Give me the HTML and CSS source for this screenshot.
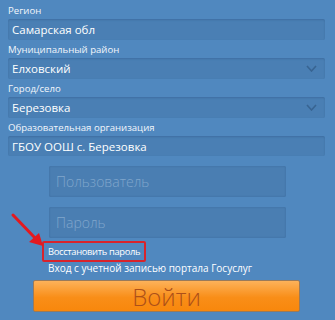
FILE: index.html
```html
<!DOCTYPE html>
<html lang="ru">
<head>
<meta charset="utf-8">
<link rel="stylesheet" href="styles.css">
</head>
<body>
<div class="page">
  <div class="fields">
    <div class="field">
      <div class="label">Регион</div>
      <div class="box">Самарская обл</div>
    </div>
    <div class="field">
      <div class="label">Муниципальный район</div>
      <div class="box select">Елховский<svg class="chev" width="11" height="7" viewBox="0 0 11 7"><path d="M1 1 L5.5 6 L10 1" fill="none" stroke="#37628f" stroke-width="1.6"/></svg></div>
    </div>
    <div class="field">
      <div class="label">Город/село</div>
      <div class="box select">Березовка<svg class="chev" width="11" height="7" viewBox="0 0 11 7"><path d="M1 1 L5.5 6 L10 1" fill="none" stroke="#37628f" stroke-width="1.6"/></svg></div>
    </div>
    <div class="field">
      <div class="label">Образовательная организация</div>
      <div class="box short">ГБОУ ООШ с. Березовка</div>
    </div>
  </div>
  <div class="login">
    <div class="big">Пользователь</div>
    <div class="big">Пароль</div>
    <div class="links">
      <span class="restore">Восстановить пароль</span>
      <span class="gos">Вход с учетной записью портала Госуслуг</span>
    </div>
    <div class="btn">Войти</div>
  </div>
  <svg class="arrow" width="40" height="40" viewBox="0 0 40 40">
    <path d="M3 3 L26 27" stroke="#e3191f" stroke-width="3" stroke-linecap="round"/>
    <path d="M33 34 L19 30 L29 21 Z" fill="#e3191f"/>
  </svg>
</div>
</body>
</html>
```
FILE: styles.css
```css
html, body {
  margin: 0;
  padding: 0;
}
body {
  background: #5088bf;
  font-family: "Open Sans", "DejaVu Sans", sans-serif;
  color: #fff;
  width: 335px;
  height: 320px;
  overflow: hidden;
}
.page {
  position: relative;
  padding: 4px 10px 0 8px;
}
.fields {
  display: flex;
  flex-direction: column;
  gap: 3px;
}
.field {
  display: flex;
  flex-direction: column;
}
.label {
  font-size: 9.6px;
  line-height: 13px;
  height: 13px;
  margin-bottom: 2px;
  color: #f2f6fb;
}
.box {
  height: 21px;
  display: flex;
  align-items: center;
  justify-content: space-between;
  padding: 0 8px 0 4px;
  font-size: 11.5px;
  background: #4a7fb4;
  border-radius: 2px;
  box-shadow: inset 0 1px 2px rgba(40, 80, 130, 0.35);
  color: #fff;
}
.box.short {
  height: 20px;
}
.chev {
  opacity: 0.9;
}
.login {
  display: flex;
  flex-direction: column;
  align-items: flex-start;
  padding-left: 41px;
  margin-top: 10px;
}
.big {
  width: 230px;
  height: 31px;
  display: flex;
  align-items: center;
  padding-left: 7px;
  margin-bottom: 10px;
  font-size: 14px;
  font-weight: 300;
  color: #80a6cc;
  background: #4a7eb2;
  border-radius: 2px;
  box-shadow: inset 0 0 2px rgba(40, 80, 130, 0.45);
}
.big + .big {
  margin-bottom: 3px;
}
.links {
  display: flex;
  flex-direction: column;
  align-items: flex-start;
  margin-left: -7px;
  font-size: 10px;
}
.restore {
  border: 2px solid #d8232b;
  border-radius: 2px;
  padding: 2px 4px 2px 4px;
  line-height: 13px;
  font-size: 9.4px;
  letter-spacing: -0.35px;
}
.gos {
  margin-left: 6px;
  line-height: 13px;
}
.btn {
  margin-left: -16px;
  margin-top: 5px;
  width: 265px;
  height: 30px;
  border: 1px solid #9a7a5a;
  border-radius: 2px;
  background: linear-gradient(#fdb25a, #f98e18 55%, #f8870c);
  display: flex;
  align-items: center;
  justify-content: center;
  font-size: 24px;
  font-weight: 300;
  color: #ad5019;
}
.arrow {
  position: absolute;
  left: 10px;
  top: 212px;
}
```
